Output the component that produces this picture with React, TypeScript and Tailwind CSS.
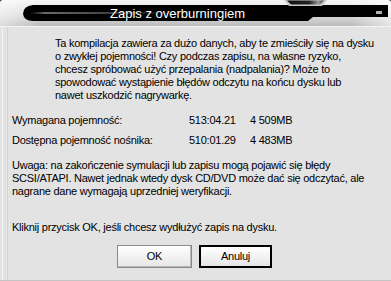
import React from "react";

const TitleArt = () => (
  <svg width="391" height="27" viewBox="0 0 391 27" className="absolute left-0 top-0">
    <defs>
      <linearGradient id="silver" x1="0" y1="0" x2="0" y2="1">
        <stop offset="0" stopColor="#f6f6f6" />
        <stop offset="0.55" stopColor="#dcdcdc" />
        <stop offset="1" stopColor="#b9b9b9" />
      </linearGradient>
      <linearGradient id="silverH" x1="0" y1="0" x2="1" y2="0">
        <stop offset="0" stopColor="#ffffff" stopOpacity="0.5" />
        <stop offset="0.1" stopColor="#ffffff" stopOpacity="0" />
        <stop offset="0.9" stopColor="#ffffff" stopOpacity="0" />
        <stop offset="1" stopColor="#ffffff" stopOpacity="0.6" />
      </linearGradient>
      <linearGradient id="shine" x1="0" y1="0" x2="1" y2="0">
        <stop offset="0" stopColor="#555" stopOpacity="0" />
        <stop offset="0.05" stopColor="#6a6a6a" />
        <stop offset="0.3" stopColor="#3a3a3a" />
        <stop offset="0.6" stopColor="#000" stopOpacity="0" />
      </linearGradient>
      <linearGradient id="tab" x1="0" y1="0" x2="1" y2="0">
        <stop offset="0" stopColor="#111" />
        <stop offset="0.6" stopColor="#222" />
        <stop offset="0.85" stopColor="#9a9a9a" />
        <stop offset="1" stopColor="#333" />
      </linearGradient>
    </defs>
    <rect x="0" y="0" width="391" height="27" fill="url(#silver)" />
    <rect x="0" y="0" width="391" height="27" fill="url(#silverH)" />
    <path d="M0 0 H3 Q0 0 0 3 Z" fill="#3a3a3a" />
    <path d="M388 0 H391 V3 Q391 0 388 0 Z" fill="#3a3a3a" />
    <path
      d="M33 5 H388 V17 H313 L308 21 H33 Q24 21 23 14 Q23 6 33 5 Z"
      fill="#000"
    />
    <rect x="30" y="12" width="300" height="2" fill="url(#shine)" />
    <path d="M284 0 H327 L322 6 H289 Z" fill="#c8c8c8" />
    <path d="M287 0.5 H324 L320 4.5 H291 Z" fill="url(#tab)" />
    <rect x="376" y="11" width="6" height="3" fill="#b0b0b0" />
    <rect x="0" y="26" width="391" height="1" fill="#f4f4f4" />
  </svg>
);

export default function App() {
  const font = { fontFamily: '"Liberation Sans", Arial, sans-serif' };
  return (
    <div
      className="relative flex h-[281px] w-[391px] flex-col overflow-hidden bg-[#e3e3e3] text-[11px] leading-[13px] tracking-[-0.25px] text-black"
      style={font}
    >
      <div className="relative h-[27px] w-full shrink-0">
        <TitleArt />
        <div className="absolute left-[110px] top-[5px] flex h-[16px] items-center whitespace-nowrap text-[13px] leading-none tracking-normal text-white">
          Zapis z overburningiem
        </div>
      </div>

      <div className="absolute bottom-0 left-[2px] top-[27px] w-px bg-[#f4f4f4]" />
      <div className="absolute bottom-0 left-[7px] top-[27px] w-px bg-[#d6d6d6]" />
      <div className="absolute inset-x-0 bottom-0 h-px bg-[#c4c4c4]" />

      <div className="flex flex-col whitespace-nowrap px-[12px]">
        <p className="mt-[10px] pl-[43px]">
          Ta kompilacja zawiera za dużo danych, aby te zmieściły się na dysku
          <br />
          o zwykłej pojemności! Czy podczas zapisu, na własne ryzyko,
          <br />
          chcesz spróbować użyć przepalania (nadpalania)? Może to
          <br />
          spowodować wystąpienie błędów odczytu na końcu dysku lub
          <br />
          nawet uszkodzić nagrywarkę.
        </p>

        <div className="mt-[12px] flex h-[20px]">
          <span className="w-[177px]">Wymagana pojemność:</span>
          <span className="w-[61px]">513:04.21</span>
          <span>4 509MB</span>
        </div>
        <div className="flex h-[13px]">
          <span className="w-[177px]">Dostępna pojemność nośnika:</span>
          <span className="w-[61px]">510:01.29</span>
          <span>4 483MB</span>
        </div>

        <p className="mt-[12px]">
          Uwaga: na zakończenie symulacji lub zapisu mogą pojawić się błędy
          <br />
          SCSI/ATAPI. Nawet jednak wtedy dysk CD/DVD może dać się odczytać, ale
          <br />
          nagrane dane wymagają uprzedniej weryfikacji.
        </p>

        <p className="mt-[23px]">Kliknij przycisk OK, jeśli chcesz wydłużyć zapis na dysku.</p>

        <div className="mt-[11px] flex justify-center gap-[7px] pr-[2px]">
          <button className="h-[23px] w-[75px] border border-[#8a8a8a] bg-gradient-to-b from-white to-[#e6e6e6] shadow-[inset_-1px_-1px_0_#b8b8b8]">
            OK
          </button>
          <button className="h-[23px] w-[73px] border-2 border-black bg-gradient-to-b from-white to-[#e6e6e6]">
            Anuluj
          </button>
        </div>
      </div>
    </div>
  );
}
